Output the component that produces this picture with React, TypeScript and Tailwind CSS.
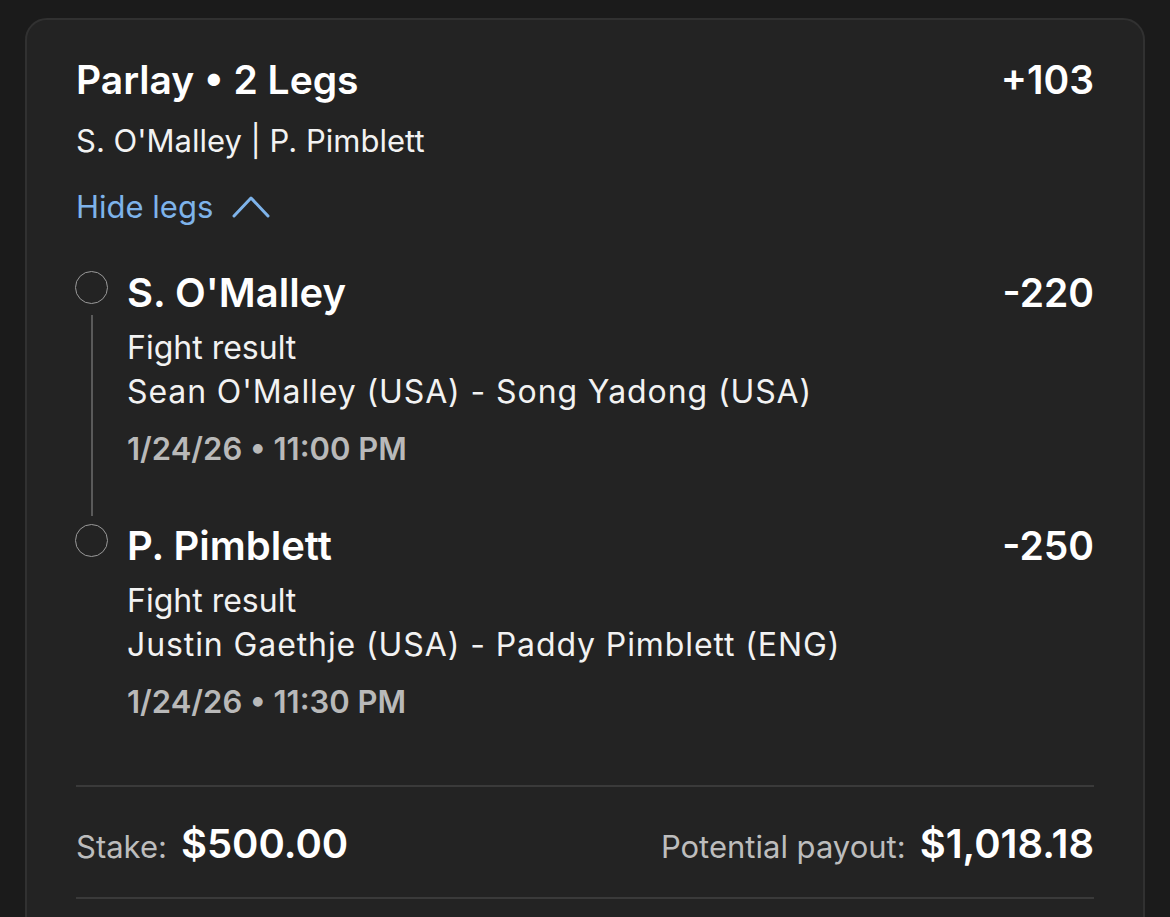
import React from 'react';

type Leg = {
  name: string;
  odds: string;
  market: string;
  event: string;
  time: string;
};

const legs: Leg[] = [
  {
    name: "S. O'Malley",
    odds: '-220',
    market: 'Fight result',
    event: "Sean O'Malley (USA) - Song Yadong (USA)",
    time: '1/24/26 • 11:00 PM',
  },
  {
    name: 'P. Pimblett',
    odds: '-250',
    market: 'Fight result',
    event: 'Justin Gaethje (USA) - Paddy Pimblett (ENG)',
    time: '1/24/26 • 11:30 PM',
  },
];

function ChevronUp() {
  return (
    <svg width="40" height="26" viewBox="0 0 40 26" fill="none" className="ml-[18px]">
      <path d="M3 22 L20 4 L37 22" stroke="#7eb3ea" strokeWidth="3" strokeLinecap="round" strokeLinejoin="round" />
    </svg>
  );
}

function LegRow({ leg, last }: { leg: Leg; last: boolean }) {
  return (
    <div className="flex">
      {/* Timeline */}
      <div className="flex w-[51px] shrink-0 flex-col items-start">
        <div className="mt-[15px] ml-[-1px] h-[33px] w-[33px] rounded-full border-[1.5px] border-[#9a9a9a]" />
        {!last && <div className="ml-[15px] mt-[11px] mb-[-7px] w-[2px] flex-1 bg-[#5a5a5a]" />}
      </div>
      <div className={`flex-1 ${last ? 'pb-[61px]' : 'pb-[38px]'}`}>
        <div className="mt-[6px] flex items-baseline justify-between">
          <span className="text-[40px] font-semibold leading-[62px] text-white">{leg.name}</span>
          <span className="text-[39px] font-semibold leading-[62px] text-white">{leg.odds}</span>
        </div>
        <div className="mt-[2px] text-[32px] leading-[44px] text-[#f2f2f2]">{leg.market}</div>
        <div className="text-[32px] leading-[44px] tracking-[0.9px] text-[#f2f2f2]">{leg.event}</div>
        <div className="mt-[13px] text-[31px] font-semibold leading-[44px] text-[#b9b9b9]">{leg.time}</div>
      </div>
    </div>
  );
}

export default function App() {
  return (
    <div className="min-h-[917px] overflow-hidden bg-[#1b1b1b] pt-[18px] pl-[25px] pr-[25px] font-['Inter',sans-serif]">
      <div className="h-[960px] rounded-[22px] border-2 border-[#313131] bg-[#232323] px-[49px] pt-[37px]">
        {/* Header */}
        <div className="flex items-baseline justify-between">
          <span className="text-[39px] font-semibold leading-[46px] text-white">Parlay • 2 Legs</span>
          <span className="text-[39px] font-semibold leading-[46px] text-white">+103</span>
        </div>
        <div className="mt-[16px] text-[31px] leading-[44px] text-[#f2f2f2]">S. O'Malley | P. Pimblett</div>
        <div className="mt-[22px] flex items-center text-[31px] leading-[44px] text-[#7eb3ea]">
          Hide legs
          <ChevronUp />
        </div>

        {/* Legs */}
        <div className="mt-[27px]">
          {legs.map((leg, i) => (
            <LegRow key={leg.name} leg={leg} last={i === legs.length - 1} />
          ))}
        </div>

        {/* Totals */}
        <div className="border-y-2 border-[#3a3a3a]">
          <div className="flex h-[110px] items-center justify-between pt-[4px]">
            <div className="flex items-baseline gap-[14px]">
              <span className="text-[31px] text-[#bdbdbd]">Stake:</span>
              <span className="text-[40px] font-semibold text-white">$500.00</span>
            </div>
            <div className="flex items-baseline gap-[14px]">
              <span className="text-[31px] text-[#bdbdbd]">Potential payout:</span>
              <span className="text-[40px] font-semibold text-white">$1,018.18</span>
            </div>
          </div>
        </div>
      </div>
    </div>
  );
}
